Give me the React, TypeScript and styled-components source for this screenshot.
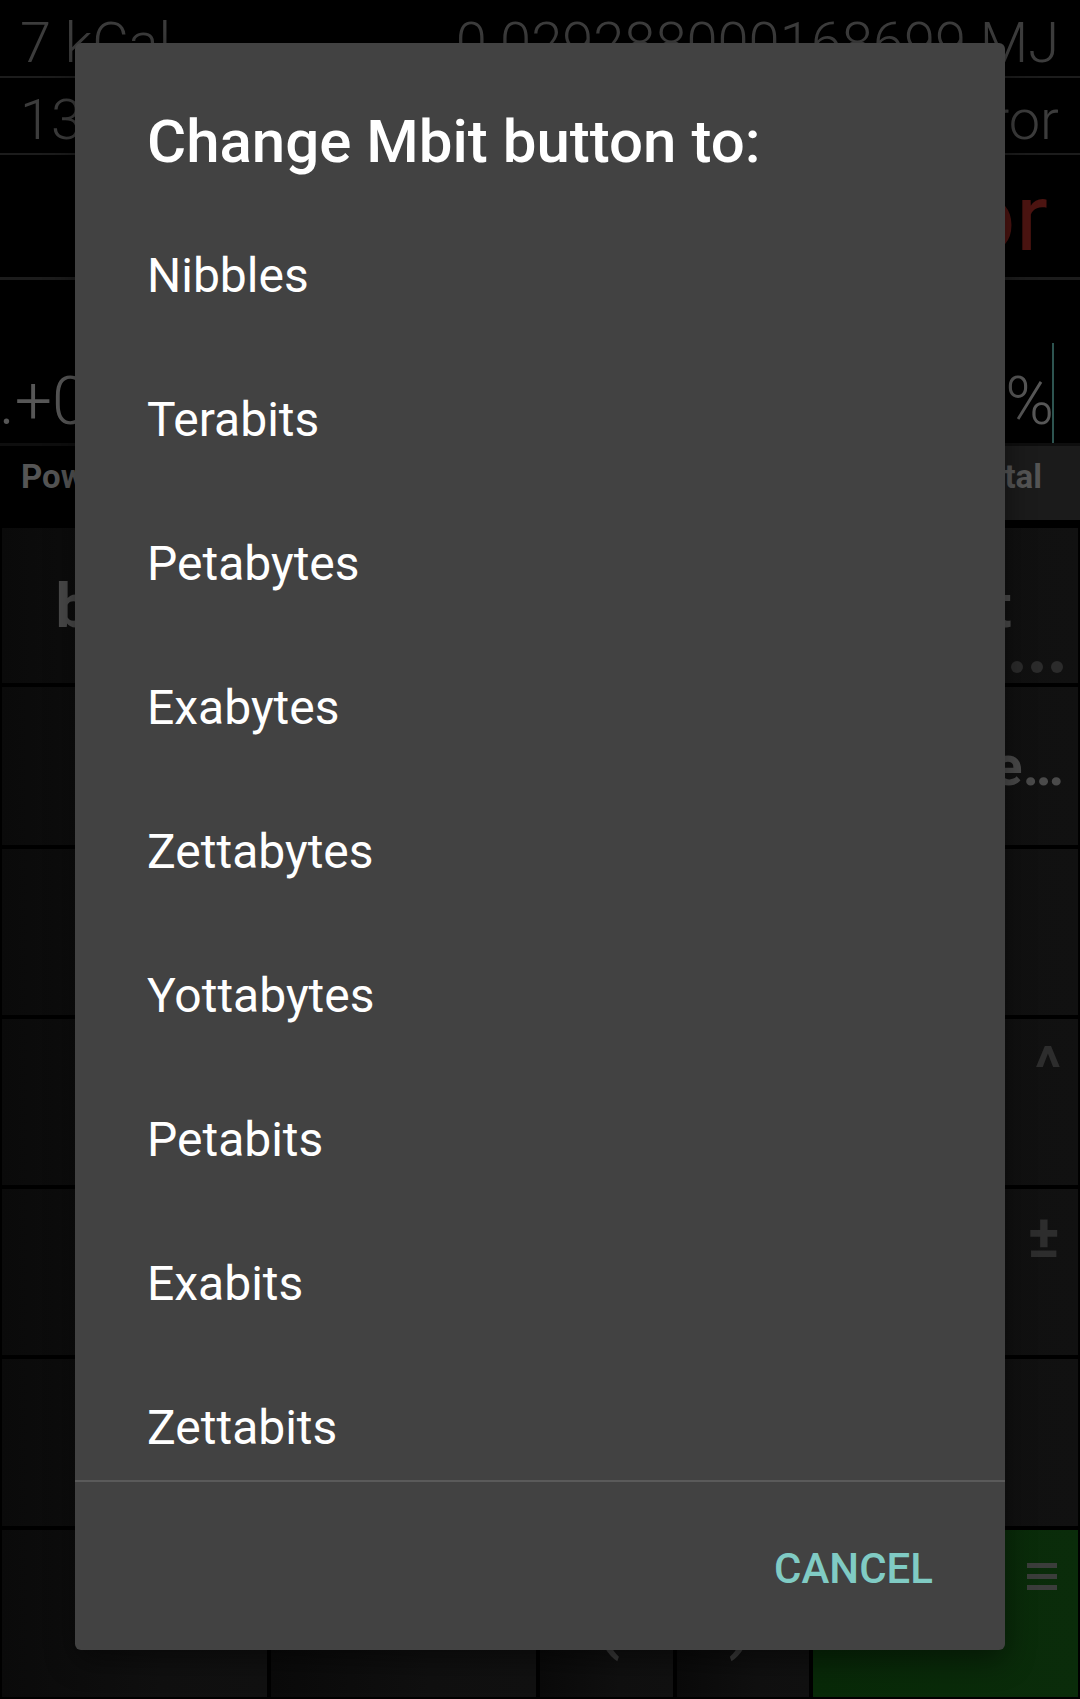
import React from "react";
import styled, { createGlobalStyle } from "styled-components";

const GlobalStyle = createGlobalStyle`
  html, body {
    margin: 0;
    padding: 0;
    background: #000;
    overflow: hidden;
  }
  body {
    font-family: Roboto, "Noto Sans", "Liberation Sans", sans-serif;
  }
  * { box-sizing: border-box; }
`;

const Screen = styled.div`
  position: relative;
  width: 1080px;
  height: 1699px;
  overflow: hidden;
  background: #000;
`;

const Calculator = styled.div`
  display: flex;
  flex-direction: column;
  width: 100%;
  height: 100%;
`;

const HistoryRow = styled.div<{ $h: number; $pt: number }>`
  height: ${(p) => p.$h}px;
  padding: ${(p) => p.$pt}px 21px 0 20px;
  display: flex;
  align-items: flex-start;
  justify-content: space-between;
  border-bottom: 2px solid #1c1c1c;
  font-size: 56px;
  font-weight: 300;
  line-height: normal;
  color: #3c3c3c;
  white-space: nowrap;
  overflow: hidden;
`;

const DisplayRow = styled.div`
  height: 125px;
  padding: 7px 32px 0 20px;
  display: flex;
  justify-content: flex-end;
  align-items: flex-start;
  border-bottom: 3px solid #1c1c1c;
  font-size: 95px;
  font-weight: 400;
  line-height: normal;
  color: #4c1411;
  white-space: nowrap;
`;

const InputRow = styled.div`
  height: 166px;
  padding: 0 26px 3px 0;
  display: flex;
  justify-content: space-between;
  align-items: flex-end;
  border-bottom: 3px solid #0e0e0e;
  font-size: 66px;
  font-weight: 300;
  line-height: normal;
  color: #575757;
  white-space: nowrap;
  overflow: hidden;
`;

const InputText = styled.span`
  margin-left: -1px;
`;

const InputEnd = styled.div`
  display: flex;
  align-items: flex-end;
`;

const Percent = styled.span`
  margin-right: -2px;
`;

const Cursor = styled.span`
  width: 2px;
  height: 100px;
  margin-bottom: -3px;
  background: #2d5450;
`;

const TabsRow = styled.div`
  height: 74px;
  margin-bottom: 8px;
  display: flex;
  justify-content: space-between;
  font-size: 33px;
  font-weight: 700;
  line-height: normal;
  color: #555;
`;

const Tab = styled.div<{ $active?: boolean }>`
  padding: 11px 38px 0 21px;
  background: ${(p) => (p.$active ? "#1b1b1b" : "transparent")};
`;

const Keypad = styled.div`
  display: flex;
  flex-direction: column;
  gap: 4px;
  padding: 0 2px;
`;

const KeyRow = styled.div<{ $h: number }>`
  display: flex;
  gap: 4px;
  height: ${(p) => p.$h}px;
`;

const Key = styled.div<{ $grow?: number; $green?: boolean; $justify?: string; $pr?: number }>`
  position: relative;
  flex: ${(p) => p.$grow ?? 1} 1 0;
  display: flex;
  align-items: center;
  justify-content: ${(p) => p.$justify ?? "center"};
  padding-right: ${(p) => p.$pr ?? 0}px;
  overflow: hidden;
  background: ${(p) =>
    p.$green
      ? "linear-gradient(90deg, #082908 0%, #0a2c0a 100%)"
      : "linear-gradient(90deg, #0a0a0a 0%, #101010 60%, #111111 100%)"};
  color: #4a4a4a;
  font-size: 62px;
  font-weight: 700;
  line-height: normal;
  white-space: nowrap;
`;

const KeyLabel = styled.span<{ $size?: number; $color?: string; $weight?: number }>`
  font-size: ${(p) => p.$size ?? 62}px;
  font-weight: ${(p) => p.$weight ?? 700};
  color: ${(p) => p.$color ?? "#4a4a4a"};
`;

const CornerLabel = styled.span<{ $top: number; $right: number; $size: number }>`
  position: absolute;
  top: ${(p) => p.$top}px;
  right: ${(p) => p.$right}px;
  font-size: ${(p) => p.$size}px;
  font-weight: 700;
  line-height: normal;
  color: #2d2d2d;
`;

const MoreDots = styled.div`
  position: absolute;
  right: 15px;
  bottom: 10px;
  display: flex;
  gap: 8px;
`;

const Dot = styled.span`
  width: 12px;
  height: 12px;
  border-radius: 50%;
  background: #2b2b2b;
`;

const MenuIcon = styled.svg`
  position: absolute;
  top: 33px;
  right: 21px;
`;

/* Dialog */

const Dialog = styled.div`
  position: absolute;
  left: 75px;
  top: 43px;
  width: 930px;
  height: 1607px;
  background: #424242;
  border-radius: 6px;
  display: flex;
  flex-direction: column;
  overflow: hidden;
  box-shadow: 0 10px 30px rgba(0, 0, 0, 0.45);
`;

const Title = styled.h2`
  margin: 0;
  padding: 63px 70px 26px 72px;
  font-size: 60px;
  font-weight: 500;
  line-height: normal;
  color: #ffffff;
  white-space: nowrap;
`;

const List = styled.div`
  flex: 1 1 auto;
  min-height: 0;
  overflow: hidden;
  display: flex;
  flex-direction: column;
`;

const Item = styled.div`
  flex: 0 0 144px;
  height: 144px;
  display: flex;
  align-items: center;
  padding: 0 70px 0 72px;
  font-size: 48px;
  font-weight: 400;
  line-height: normal;
  color: #ffffff;
`;

const Divider = styled.div`
  flex: 0 0 2px;
  background: #5a5a5a;
`;

const ButtonBar = styled.div`
  flex: 0 0 168px;
  display: flex;
  justify-content: flex-end;
  align-items: center;
  padding: 4px 48px 0 0;
`;

const TextButton = styled.button`
  border: none;
  background: transparent;
  padding: 0 24px;
  height: 144px;
  font-family: inherit;
  font-size: 42px;
  font-weight: 500;
  line-height: normal;
  color: #80cbc4;
  text-transform: uppercase;
  cursor: pointer;
`;

const units = [
  "Nibbles",
  "Terabits",
  "Petabytes",
  "Exabytes",
  "Zettabytes",
  "Yottabytes",
  "Petabits",
  "Exabits",
  "Zettabits",
];

const rowHeights = [155, 158, 166, 166, 166, 167];

export default function App() {
  return (
    <>
      <GlobalStyle />
      <Screen>
        <Calculator>
          <HistoryRow $h={78} $pt={10}>
            <span>7 kCal</span>
            <span>0.029288000168699 MJ</span>
          </HistoryRow>
          <HistoryRow $h={77} $pt={9}>
            <span>13 kJ</span>
            <span>Error</span>
          </HistoryRow>
          <DisplayRow>Error</DisplayRow>
          <InputRow>
            <InputText>.+0</InputText>
            <InputEnd>
              <Percent>%</Percent>
              <Cursor />
            </InputEnd>
          </InputRow>
          <TabsRow>
            <Tab>Power</Tab>
            <Tab $active>Digital</Tab>
          </TabsRow>
          <Keypad>
            <KeyRow $h={rowHeights[0]}>
              <Key $pr={28}><KeyLabel>bytes</KeyLabel></Key>
              <Key />
              <Key />
              <Key>
                <KeyLabel>Mbit</KeyLabel>
                <MoreDots>
                  <Dot />
                  <Dot />
                  <Dot />
                </MoreDots>
              </Key>
            </KeyRow>
            <KeyRow $h={rowHeights[1]}>
              <Key />
              <Key />
              <Key />
              <Key $justify="flex-end" $pr={14}>
                <KeyLabel $size={56}>Gbyte…</KeyLabel>
              </Key>
            </KeyRow>
            <KeyRow $h={rowHeights[2]}>
              <Key />
              <Key />
              <Key />
              <Key />
            </KeyRow>
            <KeyRow $h={rowHeights[3]}>
              <Key />
              <Key />
              <Key />
              <Key>
                <CornerLabel $top={13} $right={17} $size={60}>^</CornerLabel>
              </Key>
            </KeyRow>
            <KeyRow $h={rowHeights[4]}>
              <Key />
              <Key />
              <Key />
              <Key>
                <CornerLabel $top={12} $right={18} $size={60}>±</CornerLabel>
              </Key>
            </KeyRow>
            <KeyRow $h={rowHeights[5]}>
              <Key />
              <Key />
              <Key />
              <Key />
            </KeyRow>
            <KeyRow $h={167}>
              <Key $grow={2} />
              <Key $grow={2} />
              <Key $grow={1}>
                <KeyLabel $size={84} $weight={400} $color="#3a3a3a">(</KeyLabel>
              </Key>
              <Key $grow={1}>
                <KeyLabel $size={84} $weight={400} $color="#3a3a3a">)</KeyLabel>
              </Key>
              <Key $grow={2} $green>
                <MenuIcon width="30" height="27" viewBox="0 0 30 27">
                  <rect x="0" y="0" width="30" height="5" fill="#3b3d3b" />
                  <rect x="0" y="11" width="30" height="5" fill="#3b3d3b" />
                  <rect x="0" y="22" width="30" height="5" fill="#3b3d3b" />
                </MenuIcon>
              </Key>
            </KeyRow>
          </Keypad>
        </Calculator>

        <Dialog role="dialog" aria-label="Change Mbit button to:">
          <Title>Change Mbit button to:</Title>
          <List>
            {units.map((u) => (
              <Item key={u}>{u}</Item>
            ))}
          </List>
          <Divider />
          <ButtonBar>
            <TextButton>Cancel</TextButton>
          </ButtonBar>
        </Dialog>
      </Screen>
    </>
  );
}
